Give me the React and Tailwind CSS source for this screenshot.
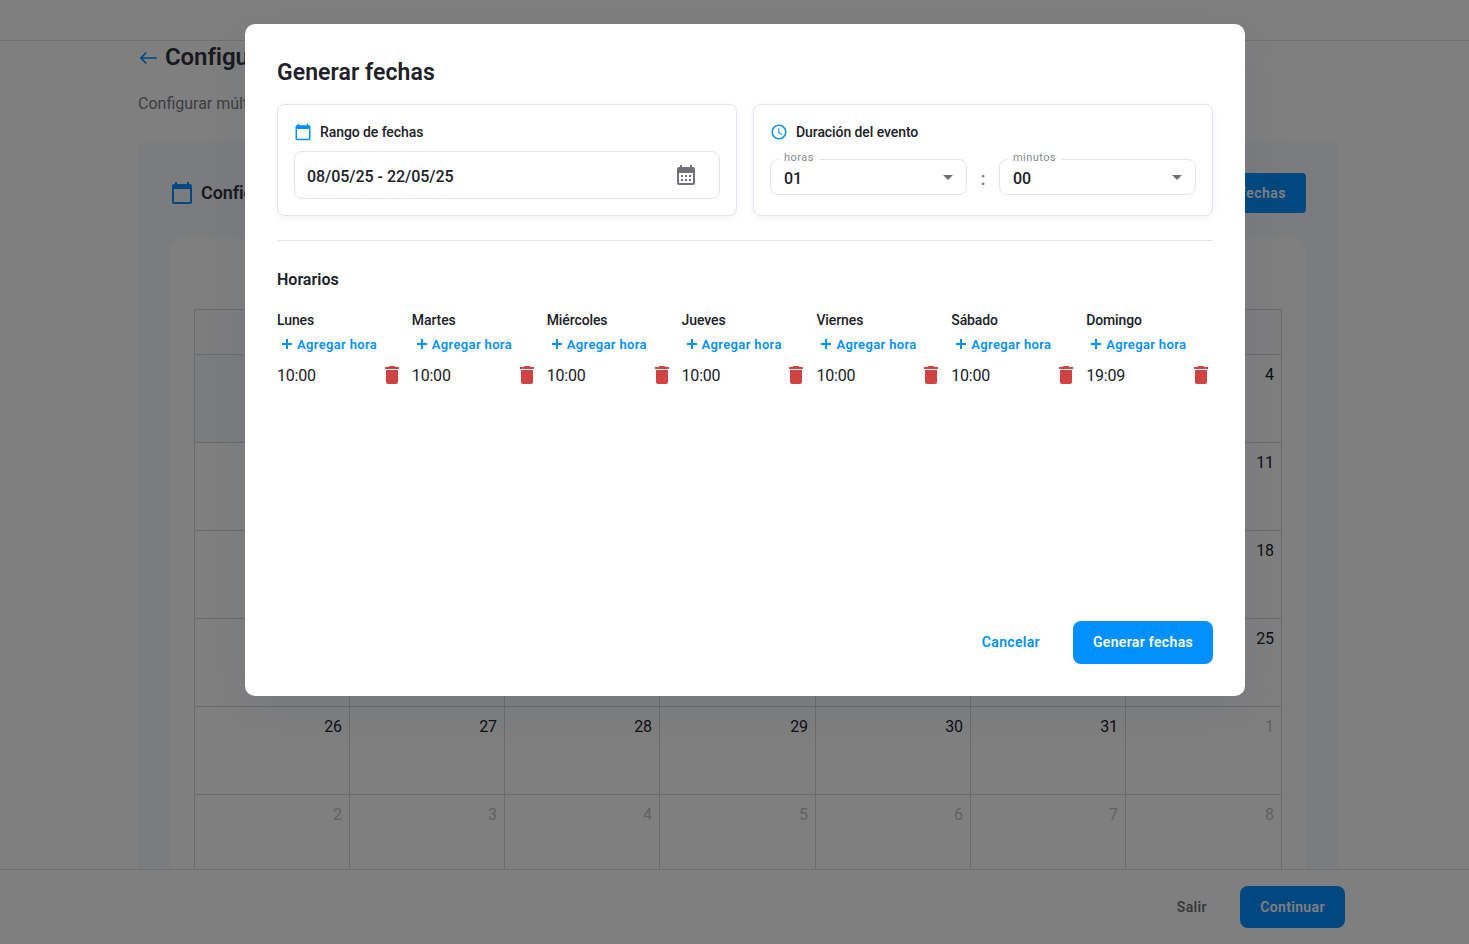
import { MdAccessTime, MdArrowDropDown, MdCalendarMonth, MdCalendarToday, MdDelete } from 'react-icons/md';

const days = [
  { name: 'Lunes', hours: ['10:00'] },
  { name: 'Martes', hours: ['10:00'] },
  { name: 'Miércoles', hours: ['10:00'] },
  { name: 'Jueves', hours: ['10:00'] },
  { name: 'Viernes', hours: ['10:00'] },
  { name: 'Sábado', hours: ['10:00'] },
  { name: 'Domingo', hours: ['19:09'] },
];

const weeks = [
  ['', '', '', '', '', '', 4],
  ['', '', '', '', '', '', 11],
  ['', '', '', '', '', '', 18],
  ['', '', '', '', '', '', 25],
  [26, 27, 28, 29, 30, 31, 1],
  [2, 3, 4, 5, 6, 7, 8],
];

function isOtherMonth(week, day) {
  return week >= 4 && day < 20;
}

function BackArrow() {
  return (
    <svg width="18" height="14" viewBox="0 0 18 14" fill="none" stroke="#0090ff" strokeWidth="1.7" strokeLinecap="round" strokeLinejoin="round">
      <path d="M17 8H2M6.8 3L1.8 8l5 5" />
    </svg>
  );
}

function Plus() {
  return (
    <svg width="10" height="10" viewBox="0 0 10 10" stroke="currentColor" strokeWidth="2">
      <path d="M5 0v10M0 5h10" />
    </svg>
  );
}

function Calendar() {
  return (
    <div className="ml-6 w-[1088px] border-t border-l border-[#d4d6dc]">
      <div className="h-[45px] border-r border-b border-[#d4d6dc] bg-[#fafbfc]" />
      {weeks.map((week, w) => (
        <div key={w} className="grid h-[88px] grid-cols-[155px_155px_155px_156px_155px_155px_156px]">
          {week.map((day, i) => (
            <div
              key={i}
              className={`border-r border-b border-[#d4d6dc] pt-2 pr-[7px] text-right text-base leading-6 tracking-[-0.1px] ${
                isOtherMonth(w, day) ? 'text-[#c4c5c9]' : 'text-[#202128]'
              } ${w === 0 && i < 3 ? 'bg-[#f7f8fb]' : ''}`}
            >
              {day}
            </div>
          ))}
        </div>
      ))}
    </div>
  );
}

function Page() {
  return (
    <div className="flex h-full flex-col bg-white">
      <div className="h-[41px] shrink-0 border-b border-[#dfe0e4]" />
      <main className="min-h-0 flex-1 overflow-hidden pl-[138px]">
        <div className="flex h-8 items-center gap-2 pl-px">
          <BackArrow />
          <h1 className="text-2xl font-semibold tracking-[-0.1px] whitespace-nowrap text-[#33333f]">Configurar fechas</h1>
        </div>
        <p className="mt-[19px] text-base leading-6 text-[#7c7d82]">Configurar múltiples fechas</p>
        <div className="mt-[25px] w-[1201px] rounded-lg bg-[#f7f9fd] pt-8 pr-[33px] pl-8">
          <div className="flex h-10 items-center justify-between">
            <div className="flex items-center gap-[7px]">
              <MdCalendarToday size={24} color="#0090ff" />
              <h2 className="text-lg font-semibold tracking-[-0.1px] text-[#33333f]">Configurar fechas</h2>
            </div>
            <button className="h-10 rounded bg-[#0090ff] px-5 text-sm font-semibold tracking-[0.5px] text-white">Generar fechas</button>
          </div>
          <div className="mt-6 h-[700px] rounded-2xl bg-white pt-[72px]">
            <Calendar />
          </div>
        </div>
      </main>
      <footer className="flex h-[75px] shrink-0 items-center justify-end gap-[33px] border-t border-[#dfe0e4] pr-[124px] text-sm font-semibold tracking-[0.35px]">
        <button className="text-[#6f7077]">Salir</button>
        <button className="h-[42px] w-[105px] rounded-lg bg-[#0090ff] text-white">Continuar</button>
      </footer>
    </div>
  );
}

function Select({ label, value }) {
  return (
    <div className="relative flex h-9 w-[197px] items-center justify-between rounded-lg border border-[#e3e5ee] pr-1.5 pl-[13px]">
      <span className="absolute -top-[10px] left-[8px] bg-white px-[5px] text-[11px] leading-4 tracking-[0.45px] text-[#87888e]">{label}</span>
      <span className="pt-[3px] text-base font-medium tracking-[-0.1px]">{value}</span>
      <MdArrowDropDown size={24} color="#717279" />
    </div>
  );
}

function Card({ icon, title, children }) {
  return (
    <section className="h-28 rounded-lg border border-[#e3e5ee] px-4 pt-[15px] shadow-[0_2px_6px_rgba(40,70,120,0.07)]">
      <div className="flex h-6 items-center gap-2 text-[#0090ff]">
        {icon}
        <h3 className="text-sm font-medium tracking-[-0.08px] text-[#202128]">{title}</h3>
      </div>
      {children}
    </section>
  );
}

function DayColumn({ day }) {
  return (
    <div>
      <div className="text-sm leading-6 font-medium tracking-[-0.1px]">{day.name}</div>
      <button className="flex h-6 items-center gap-[5px] pl-[5px] text-[13px] font-semibold tracking-[0.35px] whitespace-nowrap text-[#0090ff]">
        <Plus />
        <span className="pt-px">Agregar hora</span>
      </button>
      {day.hours.map((hour) => (
        <div key={hour} className="mt-[7px] flex h-6 items-center justify-between">
          <span className="pt-0.5 text-base tracking-[-0.2px]">{hour}</span>
          <MdDelete size={24} color="#d04343" />
        </div>
      ))}
    </div>
  );
}

function GenerateDatesDialog() {
  return (
    <div role="dialog" className="flex h-[672px] w-[1000px] flex-col rounded-[10px] bg-white px-8 pt-8 pb-8 text-[#202128] shadow-[0_12px_40px_rgba(60,70,110,0.12)]">
      <h2 className="pt-px text-[23px] leading-8 font-semibold tracking-[0.07px]">Generar fechas</h2>
      <div className="mt-[15px] grid grid-cols-2 gap-4">
        <Card icon={<MdCalendarToday size={18} />} title="Rango de fechas">
          <div className="mt-[7px] flex h-12 items-center justify-between rounded-lg border border-[#e3e5ee] pr-[21px] pl-3">
            <span className="pt-[3px] text-base font-medium tracking-[-0.05px]">08/05/25 - 22/05/25</span>
            <MdCalendarMonth size={24} color="#717279" />
          </div>
        </Card>
        <Card icon={<MdAccessTime size={18} />} title="Duración del evento">
          <div className="mt-[15px] flex items-center justify-between">
            <Select label="horas" value="01" />
            <span className="pt-1 text-lg leading-6 font-medium text-[#717279]">:</span>
            <Select label="minutos" value="00" />
          </div>
        </Card>
      </div>
      <hr className="mt-6 border-[#e3e5ee]" />
      <h3 className="mt-[27px] text-base leading-6 font-semibold">Horarios</h3>
      <div className="mt-4 grid grid-cols-7 gap-2">
        {days.map((day) => (
          <DayColumn key={day.name} day={day} />
        ))}
      </div>
      <div className="mt-auto flex items-center justify-end gap-[33px] text-sm font-semibold tracking-[0.33px]">
        <button className="pb-0.5 text-[#0090ff]">Cancelar</button>
        <button className="h-[43px] w-[140px] rounded-lg bg-[#0090ff] pb-0.5 text-white">Generar fechas</button>
      </div>
    </div>
  );
}

export default function App() {
  return (
    <div className="relative h-[944px] w-[1469px] overflow-hidden font-[Roboto,sans-serif]">
      <Page />
      <div className="absolute inset-0 flex items-start bg-black/50 pt-6 pl-[245px]">
        <GenerateDatesDialog />
      </div>
    </div>
  );
}
